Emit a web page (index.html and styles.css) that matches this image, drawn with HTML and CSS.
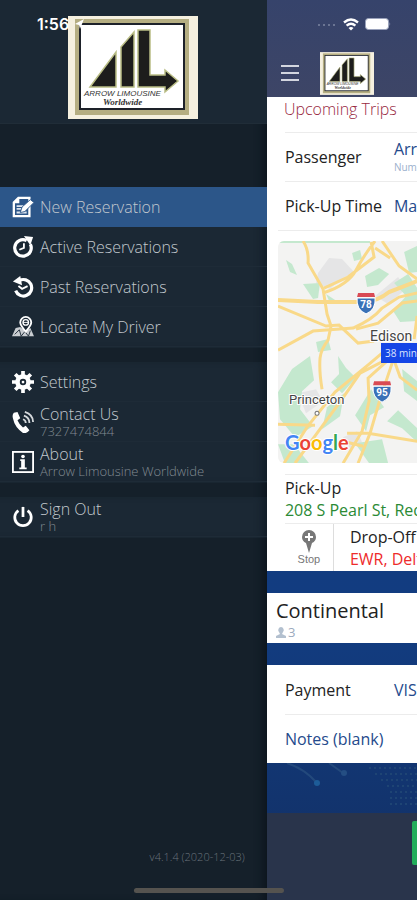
FILE: index.html
```html
<!DOCTYPE html>
<html lang="en">
<head>
    <meta charset="UTF-8">
    <meta name="viewport" content="width=device-width, initial-scale=1.0">
    <title>Arrow Limousine Worldwide</title>
    <link rel="stylesheet" href="styles.css">
</head>
<body>
    <svg class="sprite" aria-hidden="true">
        <symbol id="logo" viewBox="0 0 130 103">
            <rect width="130" height="103" fill="#f5f0df"/>
            <rect x="7" y="3" width="114" height="96" fill="#b5ae82"/>
            <rect x="11" y="7" width="106" height="87" fill="#1d2129"/>
            <rect x="13" y="9" width="102" height="83" fill="#fff"/>
            <path d="M22 71 L48 36 V71 Z M53 71 V31 L66 16 V71 Z M70 71 V14 H82 V59 H97 V54 L110 65 L97 76 V71 Z" fill="#1d1d1c" stroke="#b9bd85" stroke-width="1.5"/>
            <text class="logo-name" x="16" y="80">ARROW LIMOUSINE</text>
            <text class="logo-script" x="35" y="89">Worldwide</text>
        </symbol>
    </svg>

    <div class="status">
        <span class="time">1:56</span>
        <svg class="arrow" width="9" height="10" viewBox="0 0 9 10"><path d="M0 5 L9 0 L5 10 L4 6 Z" fill="#fff"/></svg>
        <div class="signals">
            <svg width="20" height="4" viewBox="0 0 20 4" fill="#7d86a2"><circle cx="2" cy="3" r="1"/><circle cx="7" cy="3" r="1"/><circle cx="12" cy="3" r="1"/><circle cx="17" cy="3" r="1"/></svg>
            <svg width="16" height="13" viewBox="0 0 16 13" fill="none" stroke="#fff" stroke-width="2.4"><path d="M1 4.5 Q8 -1.5 15 4.5"/><path d="M3.6 7.6 Q8 3.800 12.4 7.6"/><path d="M5.500 10 Q8 8 10.500 10 L8 12.600 Z" fill="#fff" stroke="none"/></svg>
            <svg width="26" height="12" viewBox="0 0 26 12"><rect x=".5" y=".5" width="23" height="11" rx="3" fill="#fff" stroke="#9aa2bb"/><path d="M24.500 4 Q26 6 24.500 8 Z" fill="#9aa2bb"/></svg>
        </div>
    </div>

    <div class="app">
        <aside class="drawer">
            <div class="brand">
                <svg class="brand-logo" role="img" aria-label="Arrow Limousine Worldwide"><use href="#logo"/></svg>
            </div>

            <nav class="menu">
                <div class="group">
                    <a class="item active" href="#">
                        <svg class="icon" viewBox="0 0 24 24"><path d="M7 2 H19 V22 H2 V7 Z" fill="none" stroke="#fff" stroke-width="2.500"/><path d="M8 1 V8 H1" fill="#fff"/><path d="M5 11 H14 M5 14 H11 M5 18 H16" stroke="#dfe6ef" stroke-width="2"/><path d="M9 18 L11 12 L20 4 L24 7 L14 17 Z" fill="#fff" stroke="#2c5689"/></svg>
                        <span>New Reservation</span>
                    </a>
                    <a class="item" href="#">
                        <svg class="icon" viewBox="0 0 24 24"><path d="M16 5 A9 9 0 1 0 20 9" fill="none" stroke="#fff" stroke-width="3.500"/><path d="M13 0 L23 1 L20 10 Z" fill="#fff"/><path d="M13 8 V13 L8 15" fill="none" stroke="#fff" stroke-width="2"/></svg>
                        <span>Active Reservations</span>
                    </a>
                    <a class="item" href="#">
                        <svg class="icon" viewBox="0 0 24 24"><path d="M8 5 A9 9 0 1 1 4 16" fill="none" stroke="#fff" stroke-width="3.500"/><path d="M9 0 L1 6 L11 10 Z" fill="#fff"/><path d="M7 11 L11 14 L17 11" fill="none" stroke="#fff" stroke-width="2"/></svg>
                        <span>Past Reservations</span>
                    </a>
                    <a class="item" href="#">
                        <svg class="icon" viewBox="0 0 24 24"><path d="M4 13 L9 12 L15 17 L20 13 L24 22 H0 Z" fill="#c9cdd1"/><path d="M3 20 L8 15 L10 22 L14 17 L18 22 L20 16" fill="none" stroke="#1b2834" stroke-width="1"/><path d="M15 17 Q9 10 9 7 A6 6 0 0 1 21 7 Q21 10 15 17 Z" fill="#1b2834" stroke="#fff" stroke-width="2"/><circle cx="15" cy="7" r="3" fill="none" stroke="#fff" stroke-width="1.500"/><path d="M12 7 H18" stroke="#fff"/></svg>
                        <span>Locate My Driver</span>
                    </a>
                </div>

                <div class="group">
                    <a class="item" href="#">
                        <svg class="icon" viewBox="0 0 24 24"><circle cx="12" cy="12" r="6" fill="none" stroke="#fff" stroke-width="5"/><path d="M12 0 V5 M12 19 V24 M0 12 H5 M19 12 H24 M3.500 3.500 L7 7 M17 17 L20.500 20.500 M3.500 20.500 L7 17 M17 7 L20.500 3.500" stroke="#fff" stroke-width="4"/><circle cx="12" cy="12" r="1.500" fill="#fff"/></svg>
                        <span>Settings</span>
                    </a>
                    <a class="item" href="#">
                        <svg class="icon" viewBox="0 0 24 24"><path d="M2 2 L6 1 L9 8 L6 10 Q8 15 12 18 L15 16 L19 21 Q16 25 12 24 Q3 18 1 8 Q0 4 2 2 Z" fill="#fff"/><path d="M12 9 Q15 10 15 13 M13 5 Q19 7 19 13 M14 1 Q23 4 23 12" fill="none" stroke="#d5d9dc" stroke-width="2"/></svg>
                        <span>Contact Us<small>7327474844</small></span>
                    </a>
                    <a class="item" href="#">
                        <svg class="icon" viewBox="0 0 24 24"><rect x="1" y="1" width="22" height="22" fill="none" stroke="#fff" stroke-width="2"/><path d="M9 9 H14 V18 H16 V20 H8 V18 H10 V11 H9 Z" fill="#fff"/><circle cx="12" cy="6" r="2" fill="#fff"/></svg>
                        <span>About<small>Arrow Limousine Worldwide</small></span>
                    </a>
                </div>

                <div class="group">
                    <a class="item" href="#">
                        <svg class="icon" viewBox="0 0 24 24"><path d="M7 5 A9 9 0 1 0 17 5" fill="none" stroke="#fff" stroke-width="3"/><path d="M12 1 V12" stroke="#fff" stroke-width="3"/></svg>
                        <span>Sign Out<small>r h</small></span>
                    </a>
                </div>
            </nav>

            <p class="version">v4.1.4 (2020-12-03)</p>
        </aside>

        <main class="screen">
            <header class="topbar">
                <button class="burger" aria-label="Menu"><i></i><i></i><i></i></button>
                <svg class="top-logo" aria-hidden="true"><use href="#logo"/></svg>
            </header>

            <section class="card trip">
                <h2>Upcoming Trips</h2>
                <div class="row">
                    <span class="label">Passenger</span>
                    <span class="value">Arr<small>Num</small></span>
                </div>
                <div class="row">
                    <span class="label">Pick-Up Time</span>
                    <span class="value">Ma</span>
                </div>

                <div class="map">
                    <svg viewBox="0 0 139 222" preserveAspectRatio="xMinYMin slice">
                        <rect width="139" height="222" fill="#f3f3f2"/>
                        <g fill="#e5e5e6">
                            <path d="M40 32 L51 17 L64 18 L76 31 L62 39 L52 48 L38 42 Z"/>
                            <path d="M97 55 L120 36 L128 48 L110 63 Z"/>
                            <path d="M20 152 L38 148 L45 160 L28 172 Z"/>
                            <path d="M65 196 L79 190 L84 201 L72 207 Z"/>
                        </g>
                        <g fill="#c4e8ce">
                            <path d="M0 0 H92 V2 H0 Z"/>
                            <path d="M8 19 L14 23 L19 34 L12 31 Z"/>
                            <path d="M25 43 L42 42 L40 57 L35 58 Z"/>
                            <path d="M74 12 L82 9 L84 18 L76 20 Z"/>
                            <path d="M87 35 L101 27 L111 33 L100 44 L89 46 Z"/>
                            <path d="M126 11 L139 5 V31 L131 32 Z"/>
                            <path d="M116 42 L130 33 L139 47 V80 L122 81 L115 70 L128 55 Z"/>
                            <path d="M48 53 L57 59 L52 62 Z"/>
                            <path d="M38 101 L50 98 L53 109 L40 111 Z"/>
                            <path d="M0 151 L14 128 L32 115 L36 139 L24 150 L22 168 L35 185 L17 196 L2 178 Z"/>
                            <path d="M60 115 L68 127 L78 137 L64 152 L53 141 L61 133 Z"/>
                            <path d="M49 166 L66 152 L62 175 L44 188 Z"/>
                            <path d="M93 148 L106 166 L92 174 L88 190 L77 174 Z"/>
                            <path d="M124 128 L139 140 V160 L126 150 Z"/>
                            <path d="M109 180 L120 169 L139 187 V201 L124 187 Z"/>
                            <path d="M77 202 L104 198 L110 222 H91 Z"/>
                            <path d="M0 203 H16 L31 222 H7 Z"/>
                        </g>
                        <g fill="none" stroke="#f9d989" stroke-width="3">
                            <path d="M25 0 Q31 9 30 22 L45 48 L49 73 L53 85 L50 99 Q43 108 42 117 Q41 130 44 148"/>
                            <path d="M97 0 Q86 14 78 29 T45 52 M93 1 L96 16 L70 36 L46 47 M104 0 L121 25 L139 38 M97 7 L112 17"/>
                            <path d="M0 59 L40 61 H86 Q100 60 111 51 L139 40" stroke-width="4"/>
                            <path d="M0 65 L48 85 L61 84 L80 102 L96 100"/>
                            <path d="M0 109 L35 90 L75 87 Q94 79 104 67 L121 56 L139 52 M78 88 L100 82 L124 62 L139 60"/>
                            <path d="M104 112 L91 123 L57 151 L29 186 L6 222 M115 115 L82 132 L64 158 L17 222"/>
                            <path d="M110 119 L90 137 L91 160 L84 190 L65 222 M116 116 L102 158 L92 192 L80 222"/>
                            <path d="M139 75 L136 98 M113 111 L122 136 L139 149 M0 183 L37 184 M69 192 H90 L139 200 M69 201 L85 205"/>
                        </g>
                        <g>
                            <path d="M79 57 H97 Q98 69 88 73 Q78 69 79 57 Z" fill="#3971b7" stroke="#fff"/>
                            <path d="M80 52 H96 L97 56 H79 Z" fill="#d94a54"/>
                            <text class="shield" x="88" y="67">78</text>
                        </g>
                        <g>
                            <path d="M95 145 H113 Q114 157 104 161 Q94 157 95 145 Z" fill="#3971b7" stroke="#fff"/>
                            <path d="M96 140 H112 L113 144 H95 Z" fill="#d94a54"/>
                            <text class="shield" x="104" y="155">95</text>
                        </g>
                        <text class="town edison" x="92" y="100">Edison</text>
                        <text class="town" x="11" y="163">Princeton</text>
                        <circle cx="39" cy="172" r="2" fill="#fff" stroke="#777"/>
                        <text class="google" x="7" y="209"><tspan fill="#4285f4">G</tspan><tspan fill="#ea4335">o</tspan><tspan fill="#fbbc05">o</tspan><tspan fill="#4285f4">g</tspan><tspan fill="#34a853">l</tspan><tspan fill="#ea4335">e</tspan></text>
                    </svg>
                    <span class="eta">38 min</span>
                </div>

                <div class="place pickup">
                    <span>Pick-Up</span>
                    <span class="from">208 S Pearl St, Red</span>
                </div>
                <div class="stops">
                    <button class="stop">
                        <svg width="14" height="23" viewBox="0 0 14 23"><path d="M7 23 L4 13 Q0 11 0 7 A7 7 0 0 1 14 7 Q14 11 10 13 Z" fill="#777"/><path d="M7 3 V11 M3 7 H11" stroke="#fff" stroke-width="2"/></svg>
                        <span>Stop</span>
                    </button>
                    <div class="place">
                        <span>Drop-Off</span>
                        <span class="to">EWR, Delt</span>
                    </div>
                </div>
            </section>

            <section class="card vehicle">
                <h1>Continental</h1>
                <p><svg width="10" height="11" viewBox="0 0 10 11"><path d="M5 0 A3 3 0 0 1 7 5 L6 7 L10 9 V11 H0 V9 L4 7 L3 5 A3 3 0 0 1 5 0 Z" fill="#b3c0cf"/></svg>3</p>
            </section>

            <section class="card billing">
                <div class="row">
                    <span class="label">Payment</span>
                    <span class="value">VIS</span>
                </div>
                <div class="row">
                    <a class="notes" href="#">Notes (blank)</a>
                </div>
            </section>

            <div class="backdrop">
                <svg width="150" height="50" viewBox="0 0 150 50"><path d="M20 0 Q38 6 50 20 M62 0 L76 10" fill="none" stroke="#23497c" stroke-width="2"/><circle cx="50" cy="20" r="3" fill="#1d5c98"/><circle cx="77" cy="10" r="3" fill="#244e83"/><path d="M102 5 H150 M108 11 H150 M114 17 H150 M120 23 H150 M123 29 H150 M123 35 H150 M123 41 H150" stroke="#1e4474" stroke-width="2" stroke-dasharray="2 3"/></svg>
            </div>

            <footer class="actions">
                <button class="book" aria-label="Book"></button>
            </footer>
        </main>
    </div>
    <div class="home-bar"></div>
</body>
</html>
```

FILE: styles.css
```css
* {
    margin: 0;
    padding: 0;
    box-sizing: border-box;
}

body {
    position: relative;
    font-family: "Open Sans", "Noto Sans", sans-serif;
    font-size: 16px;
    line-height: 20px;
    background-color: #15202a;
    overflow-x: hidden;
}

a {
    color: inherit;
    text-decoration: none;
}

button {
    font-family: inherit;
    border: none;
    background: none;
    cursor: pointer;
}

svg {
    display: block;
}

.sprite {
    display: none;
}

.logo-name {
    font: italic 8px "Liberation Sans", sans-serif;
    fill: #333;
}

.logo-script {
    font: italic bold 9px "Liberation Serif", serif;
    fill: #333;
}

/* status bar */
.status {
    position: absolute;
    top: 14px;
    left: 0;
    right: 0;
    z-index: 3;
    display: flex;
    align-items: center;
    height: 20px;
    padding: 0 26px 0 37px;
}

.time {
    font-family: Inter, sans-serif;
    font-size: 16px;
    font-weight: 600;
    color: #fff;
}

.arrow {
    margin-left: 6px;
}

.signals {
    display: flex;
    align-items: center;
    gap: 6px;
    margin-left: auto;
}

.app {
    display: flex;
    min-height: 100vh;
}

/* drawer */
.drawer {
    position: relative;
    z-index: 1;
    flex: 0 0 64%;
    display: flex;
    flex-direction: column;
    background-color: #15202a;
    box-shadow: inset -8px 0 8px -4px #0d151e;
    color: #c2c8ce;
    font-weight: 300;
}

.brand {
    display: flex;
    justify-content: center;
    padding: 16px 0 4px;
    background-color: #1b2834;
    border-bottom: 1px solid #202d38;
}

.brand-logo {
    width: 130px;
    height: 103px;
}

.menu {
    display: flex;
    flex-direction: column;
    gap: 14px;
    margin-top: 63px;
}

.group {
    padding-bottom: 1px;
    background-color: #1b2834;
    box-shadow: inset -8px 0 8px -4px #111c26;
}

.item {
    display: flex;
    align-items: center;
    gap: 6px;
    height: 40px;
    padding-left: 12px;
    border-bottom: 1px solid #1e2b37;
    line-height: 18px;
}

.item.active {
    background-color: #2c5689;
    border-color: #2c5689;
}

.icon {
    width: 22px;
    height: 22px;
}

.item small {
    display: block;
    font-size: 13px;
    line-height: 16px;
    color: #818a92;
}

.version {
    margin-top: auto;
    padding: 0 22px 33px 0;
    text-align: right;
    font-size: 11px;
    color: #6a737b;
}

/* screen pushed to the right */
.screen {
    flex: 1;
    min-width: 0;
    display: flex;
    flex-direction: column;
    overflow: hidden;
    white-space: nowrap;
    background: linear-gradient(#123c82, #123c80 70%, #122f63);
}

.topbar {
    display: flex;
    align-items: flex-end;
    gap: 21px;
    height: 97px;
    padding: 0 14px 2px;
    background: linear-gradient(#36436b, #3d4566);
}

.burger {
    display: flex;
    flex-direction: column;
    gap: 5px;
    width: 18px;
    padding-bottom: 14px;
}

.burger i {
    height: 2px;
    background-color: #d3d6df;
}

.top-logo {
    width: 54px;
    height: 43px;
}

.card {
    background-color: #fff;
    color: #222;
}

.trip h2 {
    height: 35px;
    padding: 2px 0 0 17px;
    font-size: 16px;
    font-weight: 300;
    color: #98283e;
}

.row {
    display: flex;
    align-items: center;
    height: 49px;
    margin-left: 18px;
    border-top: 1px solid #ececec;
}

.label {
    flex: 0 0 109px;
}

.value {
    color: #254a8c;
}

.value small {
    display: block;
    font-size: 10px;
    line-height: 16px;
    color: #9bb0cd;
}

.map {
    position: relative;
    margin: 0 0 0 11px;
    padding-top: 10px;
    border-top: 1px solid #ececec;
}

.map svg {
    width: 100%;
    height: 222px;
    border-radius: 6px 0 0 6px;
}

.eta {
    position: absolute;
    top: 112px;
    right: 0;
    width: 36px;
    padding-left: 4px;
    overflow: hidden;
    background-color: #1546e6;
    color: #dbe4ff;
    font-size: 10px;
}

.town {
    font: 13px Roboto, sans-serif;
    fill: #444;
    stroke: #fff;
    stroke-width: 2px;
    paint-order: stroke;
}

.edison {
    font-size: 14px;
}

.shield {
    font: bold 10px Roboto, sans-serif;
    fill: #fff;
    text-anchor: middle;
}

.google {
    font: bold 20px Lato, sans-serif;
    stroke: #fff;
    stroke-width: 2px;
    paint-order: stroke;
}

.place {
    display: flex;
    flex-direction: column;
    justify-content: center;
    line-height: 22px;
}

.pickup {
    height: 49px;
    margin: 11px 0 0 18px;
    border-top: 1px solid #ececec;
}

.from {
    color: #2b8a35;
}

.to {
    color: #ee2b2b;
}

.stops {
    display: flex;
    gap: 16px;
    height: 48px;
    margin-left: 18px;
    border-top: 1px solid #ececec;
}

.stop {
    display: flex;
    flex: 0 0 49px;
    flex-direction: column;
    align-items: center;
    justify-content: center;
    border-right: 1px solid #ddd;
    font: 11px/12px "Liberation Sans", sans-serif;
    color: #777;
}

.vehicle {
    height: 50px;
    margin: 22px 0;
    padding: 6px 9px 0;
}

.vehicle h1 {
    font-size: 20px;
    line-height: 24px;
    font-weight: 400;
}

.vehicle p {
    display: flex;
    align-items: center;
    gap: 2px;
    font-size: 13px;
    line-height: 18px;
    color: #9baabd;
}

.billing .row:first-child {
    border-top: none;
}

.notes {
    color: #254a8c;
}

.backdrop {
    height: 50px;
}

.actions {
    flex: 1;
    display: flex;
    justify-content: flex-end;
    min-height: 87px;
    padding-top: 8px;
    background-color: #29344b;
}

.book {
    width: 5px;
    height: 44px;
    border-radius: 2px 0 0 2px;
    background-color: #22ad5b;
}

.home-bar {
    position: absolute;
    left: 50%;
    bottom: 7px;
    z-index: 3;
    width: 36%;
    height: 5px;
    transform: translateX(-50%);
    border-radius: 3px;
    background-color: #55534f;
}
```
